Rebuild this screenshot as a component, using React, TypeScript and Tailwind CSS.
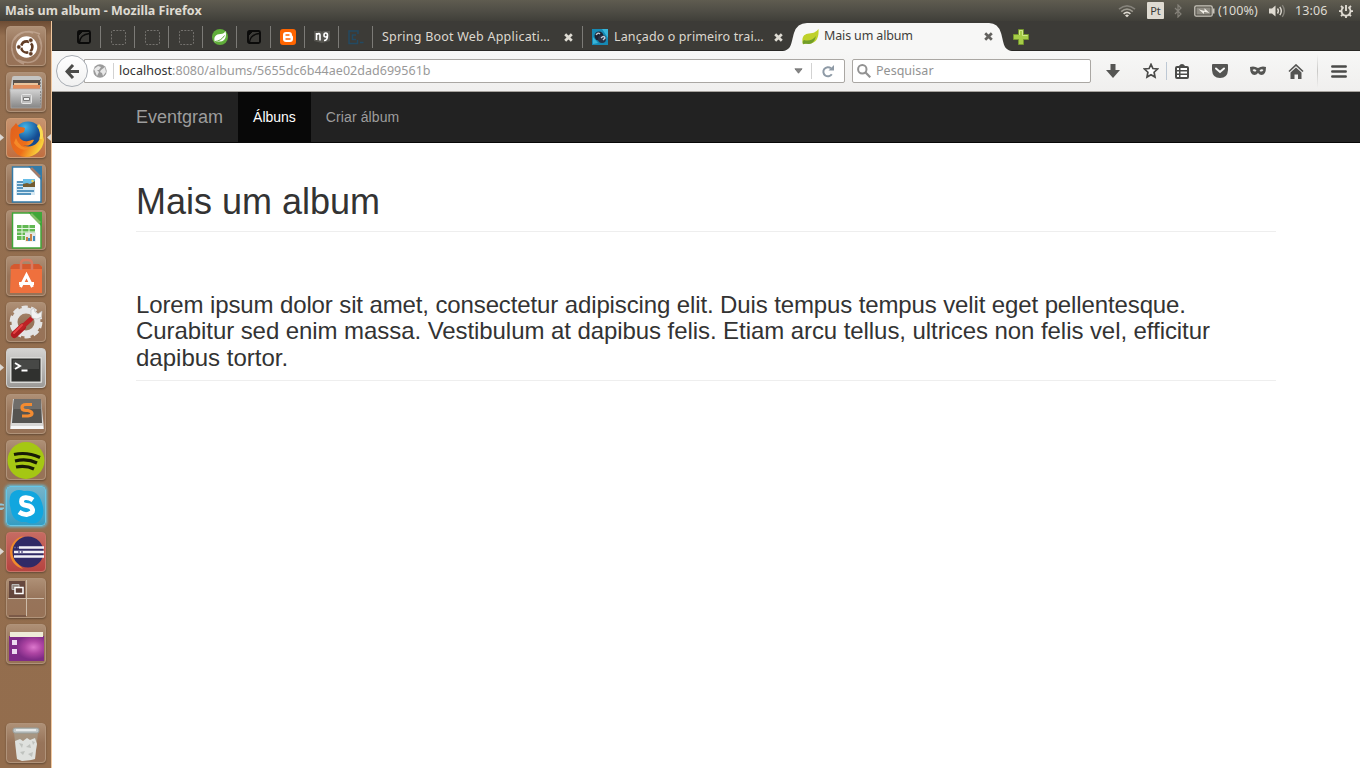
import type { ReactNode } from "react";

const UI = "font-['Noto_Sans',sans-serif]";

/* ---------- System panel ---------- */

function TopPanel() {
  return (
    <header className={`${UI} flex h-[21px] shrink-0 items-center justify-between bg-linear-to-b from-[#5f5c50] via-[#504e46] to-[#403f39] pl-[5px] pr-[7px] text-[#dfdbd2]`}>
      <span className="text-[12.5px] font-bold leading-5">Mais um album - Mozilla Firefox</span>
      <div className="flex items-center text-[12.5px] leading-5">
        <svg className="mr-[11px]" width="18" height="14" viewBox="0 0 18 14" fill="none" strokeWidth="1.6">
          <path d="M1 5.2Q9-1.6 17 5.2" stroke="#85827a" />
          <path d="M3.2 7.6Q9 2.6 14.8 7.6" stroke="#9c998f" />
          <path d="M5.6 9.8Q9 6.8 12.4 9.8" stroke="#dfdbd2" />
          <path d="M7 11.4Q9 9.8 11 11.4L9 13.2Z" fill="#dfdbd2" />
        </svg>
        <span className="mr-[10px] flex h-[17px] w-[17px] items-center justify-center rounded-[1px] bg-[#dfdbd2] text-[11px] text-[#3c3b37]">Pt</span>
        <svg className="mr-[12px]" width="8" height="14" viewBox="0 0 8 14" fill="none" stroke="#85827a" strokeWidth="1.2">
          <path d="M1 4l6 6-3 3V1l3 3-6 6" />
        </svg>
        <svg className="mr-[3px]" width="21" height="12" viewBox="0 0 21 12">
          <rect x=".8" y=".8" width="17.4" height="10.4" rx="1.5" fill="none" stroke="#c9c5bc" strokeWidth="1.3" />
          <rect x="2.5" y="2.5" width="14" height="7" fill="#8f8c83" />
          <path d="M19 3.5h1.5v5H19z" fill="#c9c5bc" />
          <path d="M4.5 4.2l6 1.8V3.2l5 4.8-5.500-1.300V9z" fill="#f2efe8" />
        </svg>
        <span className="mr-[10px] w-[41px] whitespace-nowrap tracking-[0.1px]">(100%)</span>
        <svg className="mr-[9px]" width="17" height="14" viewBox="0 0 17 14" fill="none" strokeWidth="1.4">
          <path d="M0 4.500h3L6.500 1.500v11L3 9.500H0z" fill="#dfdbd2" />
          <path d="M8.500 4.500q1.800 2.500 0 5M10.800 2.800q3 4.200 0 8.400" stroke="#dfdbd2" />
          <path d="M13.300 1.200q4 5.800 0 11.600" stroke="#85827a" />
        </svg>
        <span className="mr-[12px] w-[32px] whitespace-nowrap tracking-[0.1px]">13:06</span>
        <svg width="14" height="14" viewBox="0 0 14 14" fill="none" stroke="#dfdbd2">
          <path d="M4.600 3.300A4.500 4.500 0 1 0 9.400 3.300" strokeWidth="1.800" />
          <path d="M7 1v6" strokeWidth="1.900" />
          <path d="M2 2l1.700 1.700M12 2l-1.700 1.700M0 7.200h2.500M11.500 7.200H14M2 12.200l1.700-1.700M12 12.200l-1.700-1.700M7 11.500V14" strokeWidth="1.800" />
        </svg>
      </div>
    </header>
  );
}

/* ---------- Launcher ---------- */

function Tile({ children, tone = "plain", left = 0, right = false }: { children: ReactNode; tone?: "plain" | "fox" | "gray" | "blue" | "red"; left?: number; right?: boolean }) {
  const tones = {
    plain: "border-[#b0937a] bg-linear-to-b from-[#ae9076] via-[#97745a] to-[#977257]",
    fox: "border-[#cf9b74] bg-linear-to-b from-[#c69470] to-[#c06e40]",
    gray: "border-[#d0cfcd] bg-linear-to-b from-[#d4d3d1] to-[#9c9a98]",
    blue: "border-[#67c6e6] bg-linear-to-b from-[#74b4ca] to-[#359dc3] shadow-[0_0_3px_1px_#63c3e4]",
    red: "border-[#c97368] bg-linear-to-b from-[#c66b62] to-[#b64340]",
  };
  const shadow = tone === "blue" ? "" : "shadow-[0_1px_2px_#00000055]";
  return (
    <div className="relative flex h-[40px] w-full shrink-0 justify-center">
      <div className={`h-[40px] w-[40px] rounded-[4px] border ${shadow} ${tones[tone]}`}>
        <svg className="-ml-px -mt-px block" width="40" height="40" viewBox="0 0 40 40">{children}</svg>
      </div>
      {left === 1 && (
        <svg className="absolute left-0 top-[16px]" width="4" height="7" viewBox="0 0 4 7"><path d="M0 0l4 3.500-4 3.500z" fill="#dcd8d3" /></svg>
      )}
      {left === 2 && (
        <svg className="absolute left-0 top-[17px]" width="4" height="8" viewBox="0 0 4 8"><path d="M0 1h2l2 1H0zM0 5h4l-2 1.500H0z" fill="#8ec9df" stroke="#8ec9df" /></svg>
      )}
      {right && (
        <svg className="absolute right-0 top-[16px]" width="4" height="7" viewBox="0 0 4 7"><path d="M4 0L0 3.500 4 7z" fill="#dcd8d3" /></svg>
      )}
    </div>
  );
}

function Launcher() {
  return (
    <aside className="flex h-full w-[52px] shrink-0 flex-col items-stretch gap-[6px] border-r border-[#f2c9a0] bg-linear-to-b from-[#6d4c34] via-[#946f50] via-2% to-[#936d4d] pb-[5px] pt-[5px]">
      <Tile>
        <g fill="none" stroke="#dcc6b5" strokeWidth="1.500" opacity=".45">
          <path d="M6 25C4 10 16 3 27 7M12 34C29 42 39 28 34 15M8 14Q17 1 34 8M32 9q8 13-2 24M6 22q0 12 12 16" />
        </g>
        <circle cx="20.500" cy="21" r="10.700" fill="#fff" />
        <circle cx="20.800" cy="21" r="5.600" fill="none" stroke="#603c25" strokeWidth="2.600" strokeDasharray="9.700 2" strokeDashoffset="4.800" />
        <g fill="#603c25" stroke="#fff" strokeWidth=".6"><circle cx="12.800" cy="21" r="2.200" /><circle cx="24.800" cy="14.200" r="2.200" /><circle cx="24.800" cy="27.800" r="2.200" /></g>
      </Tile>
      <Tile>
        <defs><linearGradient id="cabinet" x2="0" y2="1"><stop stopColor="#d5d5d5" /><stop offset="1" stopColor="#858585" /></linearGradient></defs>
        <path d="M6 6q0-2 2-2h24q3 0 4 3v13H4z" fill="#c4c4c2" />
        <path d="M7 8h27v9H7z" fill="#57504a" />
        <path d="M8 11h24v2H8z" fill="#e9c49c" /><path d="M7 13h27v4H7z" fill="#e08d5c" />
        <path d="M4 17h32l-1 19H5z" fill="url(#cabinet)" stroke="#aaa" strokeWidth=".7" />
        <rect x="15.500" y="22.500" width="10" height="9" rx="1" fill="#bdbdbd" stroke="#e5e5e5" />
        <path d="M17.500 25.500h6v3h-6z" fill="#eee" stroke="#777" />
        <path d="M34.500 7v8M34.500 19v15" stroke="#8c8c8c" strokeDasharray="2 1" />
      </Tile>
      <Tile tone="fox" left={1} right>
        <defs><radialGradient id="globe" cx=".4" cy=".2"><stop stopColor="#42b4e8" /><stop offset="1" stopColor="#144b91" /></radialGradient>
          <linearGradient id="fox" x2="1" y2=".5"><stop stopColor="#df601f" /><stop offset=".6" stopColor="#ed6e19" /><stop offset="1" stopColor="#f9d13b" /></linearGradient></defs>
        <circle cx="22" cy="18" r="14.500" fill="url(#globe)" />
        <path d="M5 11c2-3 4-4 5-6l3 4c2 0 4 0 6 1l-1 4-5 2c0 5 4 8 9 7 2 0 4-2 6-1-2 5-7 7-12 5 9 4 19-1 18-11 0-3-1-5-3-7 4 2 6 8 7 13-1 10-9 17-18 17C9 39 2 28 5 11z" fill="url(#fox)" />
        <path d="M32 7q5 6 3 14" fill="none" stroke="#fadb51" strokeWidth="3" />
        <path d="M10 20q3 10 14 10-9 5-16-5z" fill="#f58a28" />
      </Tile>
      <Tile>
        <path d="M6.500 3h20l8.500 9v26H6.500z" fill="#fff" stroke="#347ba8" strokeWidth="1.500" />
        <path d="M22 2h14v15z" fill="#347ba8" /><path d="M25 4l9 9" stroke="#a57d6a" strokeWidth="2.500" />
        <path d="M10 17h19v14H10z" fill="#d7e9f3" />
        <path d="M11 18h6M11 21h6M11 24h6M11 27h17M11 30h14" stroke="#2c79ad" strokeWidth="1.600" />
        <path d="M17 15h12v8H17z" fill="#68bde7" /><path d="M17 23v-3l4-1 3 1 5-3v6z" fill="#745c31" />
        <circle cx="26.500" cy="17" r="1.200" fill="#f7d94c" />
      </Tile>
      <Tile>
        <path d="M6.500 3h20l8.500 9v26H6.500z" fill="#fff" stroke="#40a639" strokeWidth="1.500" />
        <path d="M22 2h14v15z" fill="#40a639" /><path d="M25 4l9 9" stroke="#83be68" strokeWidth="2.500" />
        <path d="M11 15h18v15H11z" fill="#61b852" />
        <path d="M11 18.500h18M11 22h18M11 25.500h18M16 15v15M23 15v15" stroke="#e6f5e2" />
        <path d="M19 22.500h11v9H19z" fill="#e5e8e9" /><path d="M21 27v4M25 24v7" stroke="#c88347" strokeWidth="2" />
        <path d="M23 28v3M28 26v5" stroke="#438abd" strokeWidth="2" />
      </Tile>
      <Tile>
        <path d="M5 10h31v27H4z" fill="#ef703d" /><path d="M5 10l3-2h25l3 3v2H4z" fill="#d4592f" />
        <path d="M15 14V8q0-4 4-4h3q4 0 4 4v6" fill="none" stroke="#d97a60" strokeWidth="2.500" />
        <path d="M14.500 31l6-12 6 12M13 27.500h15" fill="none" stroke="#fff" strokeWidth="3" />
      </Tile>
      <Tile>
        <circle cx="20" cy="20" r="11.500" fill="none" stroke="#e4e4e4" strokeWidth="6" />
        <circle cx="20" cy="20" r="14.700" fill="none" stroke="#e4e4e4" strokeWidth="3.500" strokeDasharray="6 3.230" />
        <path d="M8.500 32.500l8-7.500" stroke="#b01b20" strokeWidth="7" strokeLinecap="round" />
        <path d="M15 26l10-9" stroke="#bc2226" strokeWidth="4.500" strokeLinecap="round" />
        <path d="M8 31l8-8" stroke="#e64445" strokeWidth="2" strokeLinecap="round" />
        <path d="M25 8l3-2 1 4 3 2 4-3-.5 6-4.500 2-5-1-1-4z" fill="#f2f2f2" stroke="#bbb" strokeWidth=".6" />
      </Tile>
      <Tile tone="gray" left={1}>
        <rect x="4" y="9" width="32" height="26" rx="1" fill="#d9d9d6" />
        <rect x="5.500" y="10.500" width="29" height="23" fill="#30312f" />
        <path d="M7 12h26v9H7z" fill="#474846" />
        <path d="M9 15l5 3-5 3M15.500 22.500h6" fill="none" stroke="#fff" strokeWidth="1.900" />
      </Tile>
      <Tile>
        <path d="M7 5h28l3 30H4z" fill="#d9d8d6" /><path d="M5 32h32v3H5z" fill="#f7f7f7" />
        <path d="M8 5h27l1 24H6z" fill="#555451" /><path d="M8 5h27v10H7z" fill="#6f6d6a" />
        <path d="M26 10.500h-6q-4 0-4 3t4 3h2q4 1 4 3t-4 2.500h-6" fill="none" stroke="#f38b31" strokeWidth="3.200" />
      </Tile>
      <Tile>
        <circle cx="20" cy="20.500" r="18.500" fill="#a5c713" />
        <path d="M8 14.500q13-3 26 3M9 21q12-3 22 2M10 27q10-2 18 2" fill="none" stroke="#171b06" strokeWidth="3.200" />
      </Tile>
      <Tile tone="blue" left={2}>
        <path d="M5 8q5-6 13-3Q32 3 36 17q4 13-4 19-5 3-12 0Q7 37 5 24 2 14 5 8z" fill="#11a6df" />
        <path d="M27 14q-3.500-2.500-7.500-2.300T15.500 15.500t5 4 6 4-5.500 5q-4 .3-8-2.500" fill="none" stroke="#fff" strokeWidth="4.800" />
      </Tile>
      <Tile tone="red" left={1}>
        <path d="M17 4A17 17 0 0 0 17 37Q8 29 9 20T17 4" fill="#f08a2c" />
        <circle cx="22" cy="20" r="15.500" fill="#302a66" />
        <path d="M13 15.500h25M8 20h30M8 24.500h30" stroke="#f2f1f7" strokeWidth="2.400" />
        <path d="M8 15.500h5M12 20h5" stroke="#665f91" strokeWidth="1.500" strokeDasharray="2 1" />
      </Tile>
      <Tile>
        <path d="M3 3h16v17H3z" fill="#5e4039" opacity=".9" /><path d="M3 38h17" stroke="#5e4039" />
        <path d="M20.500 2v36M2 20.500h36" stroke="#cdbba9" />
        <path d="M6 6.500h7v5H6z" fill="#92857e" stroke="#bbb" /><path d="M9 9.500h8v6H9z" fill="#5e4039" stroke="#fff" strokeWidth="1.500" />
      </Tile>
      <Tile>
        <defs><radialGradient id="purple" cx=".7" cy=".45"><stop stopColor="#dc78cd" /><stop offset=".5" stopColor="#ae45a3" /><stop offset="1" stopColor="#7e2b86" /></radialGradient></defs>
        <path d="M3 12h35v25H3z" fill="url(#purple)" /><path d="M4 8h33v5H4z" fill="#eeecd9" />
        <path d="M6 16h5v5H6zM6 25h5v5H6z" fill="#ecdcef" />
      </Tile>
      <div className="mt-auto">
        <Tile>
          <path d="M8 10h24l-3 26q-9 3-18 0z" fill="#aaa08f" opacity=".7" />
          <path d="M9 18l5-2 3 2 4-3 3 2 5-2 2 6-1 6-1 9-4 1-9 1-5-2-1-8z" fill="#dfe1de" />
          <path d="M13 20l4 1-1 4zM20 24l4-3 1 4zM14 29l5-1-2 4zM22 31l5-2-1 5zM26 18l3 1-2 3z" fill="#bfc2be" />
          <rect x="7" y="5" width="26" height="5" rx="2" fill="#c3c9c9" stroke="#969d9a" /><path d="M10 7h20" stroke="#f3f5f5" strokeWidth="1.500" />
        </Tile>
      </div>
    </aside>
  );
}

/* ---------- Browser tabs ---------- */

function FrameIcon() {
  return (
    <svg width="14" height="14" viewBox="0 0 14 14" fill="none" stroke="#0b0b0a">
      <rect x="1" y="1" width="12" height="12" rx="1.500" strokeWidth="1.900" /><path d="M2.500 12.500Q3 4.500 12.500 3.500" strokeWidth="1.300" /><path d="M1.500 1.500h4l-4 4z" fill="#0b0b0a" />
    </svg>
  );
}
function EmptyIcon() {
  return (
    <svg width="15" height="15" viewBox="0 0 15 15" fill="none" stroke="#74726e">
      <rect x=".500" y=".500" width="14" height="14" rx="1.500" strokeDasharray="2 1.300" />
    </svg>
  );
}
function SpringIcon() {
  return (
    <svg width="16" height="16" viewBox="0 0 16 16"><circle cx="8" cy="8" r="8" fill="#60ad3a" /><path d="M13.500 2c1.500 6-.5 10-5 10.500-2 .2-4 .2-5.500.8C1 8 4 5 8.500 5 11 5 12.500 4 13.500 2z" fill="#fff" /><path d="M3 12.500q6-.5 9.500-6" stroke="#60ad3a" fill="none" /></svg>
  );
}
function BloggerIcon() {
  return (
    <svg width="16" height="16" viewBox="0 0 16 16"><rect width="16" height="16" rx="3" fill="#ff6500" /><path d="M6 3h3c2 0 3 1 3 3 0 1 1 .8 1 2v2c0 2-1 3-3 3H6c-2 0-3-1-3-3V6c0-2 1-3 3-3z" fill="#fff" /><path d="M6 6h3M6 10h4" stroke="#ff6500" strokeWidth="1.400" strokeLinecap="round" /></svg>
  );
}
function BookIcon() {
  return (
    <svg width="16" height="14" viewBox="0 0 16 14"><path d="M0 1h7l1 1 1-1h7v10l-8 2-8-2z" fill="#575651" /><path d="M2.500 10V3M2.500 4.500q3.500-2 3.500.500v5.500M10 10.500q3.500 0 3.500-5 0-2.500-1.700-2.500T10 5t1.700 2 1.800-1.500" fill="none" stroke="#fff" strokeWidth="1.600" /></svg>
  );
}
function CodeIcon() {
  return (
    <svg width="16" height="15" viewBox="0 0 16 15" fill="none" stroke="#234a62"><path d="M9.500 10v3.500H1V1h9v3M8 5H4.500v4.500H8" strokeWidth="1.500" /><path d="M12 12.500h3.500" strokeWidth="1.500" /></svg>
  );
}
function Close({ color }: { color: string }) {
  return (
    <svg className="shrink-0" width="9" height="9" viewBox="0 0 9 9" fill="none" stroke={color} strokeWidth="2.700"><path d="M1.200 1.200l6.600 6.600M7.800 1.200L1.200 7.800" /></svg>
  );
}

const pinned = [FrameIcon, EmptyIcon, EmptyIcon, EmptyIcon, SpringIcon, FrameIcon, BloggerIcon, BookIcon, CodeIcon];

function TabStrip() {
  return (
    <div className={`${UI} flex h-[30px] shrink-0 items-start border-b border-[#282724] bg-[#3c3b37] pl-[15px] text-[12.5px]`}>
      {pinned.map((Icon, i) => (
        <div key={i} className="mt-[5px] flex h-[22px] w-[34px] items-center justify-center border-r border-[#7c7b77] pl-px"><Icon /></div>
      ))}
      <div className="mt-[5px] flex h-[22px] w-[210px] items-center border-r border-[#7c7b77] pl-[9px] pr-[9px] text-[#dcd8cf]">
        <span className="grow whitespace-nowrap tracking-[0.22px]">Spring Boot Web Applicati…</span>
        <Close color="#dedbd3" />
      </div>
      <div className="mt-[5px] flex h-[22px] w-[200px] items-center pl-[9px] text-[#dcd8cf]">
        <svg className="mr-[6px] shrink-0" width="16" height="16" viewBox="0 0 16 16"><rect width="16" height="16" fill="#1689b4" /><path d="M1 15V8l5 6zM10 0h6v9z" fill="#38b5d9" /><circle cx="7" cy="7" r="4.500" fill="#1c2333" /><circle cx="10" cy="10" r="4" fill="#293145" /><path d="M4 6q2-3 4-1M9 9q3-3 4 0l-2 2" fill="none" stroke="#c3ced8" strokeWidth="1.300" /></svg>
        <span className="grow whitespace-nowrap tracking-[0.12px]">Lançado o primeiro trai…</span>
        <Close color="#dedbd3" />
      </div>
      <div className="relative ml-[-2px] mt-[2px] h-[28px] w-[233px] shrink-0">
        <svg className="absolute inset-0" width="233" height="28" viewBox="0 0 233 28"><path d="M0 28C11 28 10 20 13 10Q16 0 26 0H208Q217 0 220 10C223 20 222 28 233 28z" fill="#f7f7f6" /></svg>
        <div className="relative flex h-[27px] items-center pl-[21px] pr-[21px] text-[#3f3e3b]">
          <svg className="mr-[5px]" width="17" height="16" viewBox="0 0 17 16"><path d="M16.500 0c.7 9-2.500 14-8 14.500-3 .3-5-.5-7.500 1C-1 8 2 5 7 4.500S14 3 16.500 0z" fill="#bfd129" /><path d="M1 15Q0 12 2 11q7 2 12-4-2 8-7 8-4-.5-6 0z" fill="#729e28" /></svg>
          <span className="grow whitespace-nowrap tracking-[-0.15px]">Mais um album</span>
          <Close color="#63625f" />
        </div>
      </div>
      <svg className="ml-[-1px] mt-[8px]" width="16" height="16" viewBox="0 0 16 16"><path d="M5.500.500h5v5h5v5h-5v5h-5v-5h-5v-5h5z" fill="#a6cc48" stroke="#74952e" /><path d="M6.500 6V1.500h3v5h5" fill="none" stroke="#d0e889" /></svg>
    </div>
  );
}

/* ---------- Browser toolbar ---------- */

function Toolbar() {
  return (
    <div className={`${UI} flex h-[41px] shrink-0 items-center border-b border-[#a6a39e] bg-linear-to-b from-[#f7f7f6] to-[#f0efee] pl-[4px] text-[12.5px]`}>
      <div className="z-10 flex h-[32px] w-[32px] shrink-0 items-center justify-center rounded-full border border-[#a8adb4] bg-linear-to-b from-white to-[#f1f1f1]">
        <svg width="15" height="15" viewBox="0 0 15 15" fill="none" stroke="#4b4b49" strokeWidth="3"><path d="M8 1L2 7.500 8 14M2.500 7.500H14" /></svg>
      </div>
      <div className="ml-[-4px] flex h-[24px] w-[761px] shrink-0 items-center rounded-r-[2px] border border-[#aaa7a3] bg-white pl-[8px]">
        <svg width="14" height="14" viewBox="0 0 14 14"><circle cx="7" cy="7" r="6.700" fill="#9b9b9b" /><path d="M1 5l4-3 3 1-2 3H4l2 2-2 4M8 6l4-3 1 5-3 4-1-3-2-1z" fill="#e8e8e8" /></svg>
        <span className="ml-[6px] h-[16px] w-px bg-[#d2d2d2]" />
        <span className="ml-[5px] grow whitespace-nowrap tracking-[0.03px] text-[#999]"><span className="text-[#333]">localhost</span>:8080/albums/5655dc6b44ae02dad699561b</span>
        <svg width="9" height="6" viewBox="0 0 10 6"><path d="M1 .500h8L5 5.500z" fill="#858585" stroke="#5c5c5c" strokeWidth=".7" /></svg>
        <span className="ml-[8px] h-[16px] w-px bg-[#d2d2d2]" />
        <svg className="ml-[10px] mr-[9px]" width="13" height="13" viewBox="0 0 13 13" fill="none"><path d="M9.800 9.300A4.600 4.600 0 1 1 9 3.300" stroke="#8e9aa6" strokeWidth="2" /><path d="M12 0v5.500H6.500z" fill="#8e9aa6" /></svg>
      </div>
      <div className="ml-[7px] flex h-[24px] w-[239px] shrink-0 items-center rounded-[2px] border border-[#aaa7a3] bg-white pl-[4px] text-[#929292]">
        <svg width="14" height="14" viewBox="0 0 14 14" fill="none" stroke="#929292"><circle cx="5.300" cy="5.300" r="4.200" strokeWidth="2" /><path d="M8.300 8.300l5 5" strokeWidth="2.200" /></svg>
        <span className="ml-[5px] tracking-[0.02px]">Pesquisar</span>
      </div>
      <svg className="ml-[15px]" width="14" height="14" viewBox="0 0 14 14"><path d="M4.500 0h5v6H14l-7 8-7-8h4.500z" fill="#555553" /></svg>
      <svg className="ml-[23px]" width="16" height="16" viewBox="0 0 16 16"><path d="M8 1.400l1.900 4.100 4.600.5-3.400 3.200.9 4.900L8 11.700l-4 2.400.9-4.900L1.500 6l4.600-.5z" fill="#fff" stroke="#4b4b49" strokeWidth="1.700" /></svg>
      <span className="ml-[7px] h-[18px] w-px bg-[#bdc8d4]" />
      <svg className="ml-[8px]" width="14" height="15" viewBox="0 0 14 15"><path d="M4 2q1-2 3-2t3 2h2q2 0 2 2v9q0 2-2 2H2q-2 0-2-2V4q0-2 2-2z" fill="#4b4b49" /><path d="M2 5h2M5.500 5H12M2 8.500h2M5.500 8.500H12M2 12h2M5.500 12H12" stroke="#fff" strokeWidth="2" /></svg>
      <svg className="ml-[23px]" width="16" height="14" viewBox="0 0 16 14"><path d="M1 0h14q1 0 1 1v5q-.5 8-8 8T0 6V1q0-1 1-1z" fill="#555553" /><path d="M4 4.500L8 8l4-3.500" fill="none" stroke="#f7f7f6" strokeWidth="2" strokeLinecap="round" /></svg>
      <svg className="ml-[22px]" width="16" height="10" viewBox="0 0 16 10"><path fillRule="evenodd" d="M0 1q4-1.500 8 1 4-2.500 8-1 0 8-4.500 8Q9.500 9 8 7 6.500 9 4.500 9 0 9 0 1zm2.500 3q2 2.700 4 .7Q4.500 2.300 2.500 4zm7 .7q2 2 4-.7-2-1.700-4 .7z" fill="#555553" /></svg>
      <svg className="ml-[22px]" width="16" height="15" viewBox="0 0 16 15"><path d="M1 7.500l7-6.500 7 6.500" fill="none" stroke="#555553" strokeWidth="1.700" /><path d="M2.500 8.500L8 3.500l5.500 5V15H10v-4.500H6.500V15h-4z" fill="#555553" /></svg>
      <span className="ml-[13px] h-[34px] w-px bg-linear-to-b from-transparent via-[#c9c8c6] to-transparent" />
      <svg className="ml-[13px]" width="16" height="13" viewBox="0 0 16 13" stroke="#4b4b49" strokeWidth="2.500" strokeLinecap="round"><path d="M1.300 1.500h13.400M1.300 6.500h13.400M1.300 11.500h13.400" /></svg>
    </div>
  );
}

/* ---------- Page ---------- */

function Page() {
  return (
    <main className="grow bg-white font-['Liberation_Sans',sans-serif] text-[#333]">
      <nav className="h-[51px] border-b border-[#080808] bg-[#222]">
        <div className="mx-auto flex h-full w-[1170px] items-stretch text-[14px] text-[#9d9d9d]">
          <a className="flex items-center px-[15px] text-[18px]">Eventgram</a>
          <a className="flex items-center bg-[#080808] px-[15px] text-white">Álbuns</a>
          <a className="flex items-center px-[15px] tracking-[0.1px]">Criar álbum</a>
        </div>
      </nav>
      <div className="mx-auto w-[1170px] px-[15px]">
        <div className="mt-[39px] border-b border-[#eee] pb-[9px]">
          <h1 className="text-[36px] leading-[40px]">Mais um album</h1>
        </div>
        <div className="mt-[60px] border-b border-[#eee] pb-[9px]">
          <h3 className="text-[24px] leading-[26.400px]">
            <span className="tracking-[-0.12px]">Lorem ipsum dolor sit amet, consectetur adipiscing elit. Duis tempus tempus velit eget pellentesque. </span>
            <span className="tracking-[-0.07px]">Curabitur sed enim massa. Vestibulum at dapibus felis. Etiam arcu tellus, ultrices non felis vel, efficitur </span>
            dapibus tortor.
          </h3>
        </div>
      </div>
    </main>
  );
}

export default function App() {
  return (
    <div className="flex h-[768px] w-[1360px] flex-col overflow-hidden">
      <TopPanel />
      <div className="flex min-h-0 grow">
        <Launcher />
        <div className="flex min-w-0 grow flex-col">
          <TabStrip />
          <Toolbar />
          <Page />
        </div>
      </div>
    </div>
  );
}
